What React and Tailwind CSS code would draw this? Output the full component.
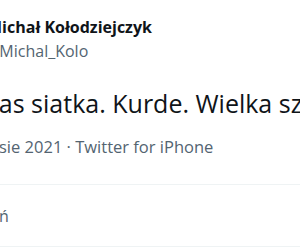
import React from 'react'

export default function App() {
    return (
        <div className="w-[300px] h-[250px] overflow-hidden bg-white" style={{ fontFamily: '"Open Sans", "Noto Sans", sans-serif' }}>
            {/* Author */}
            <div className="pt-[17px] whitespace-nowrap">
                <div className="ml-[-13px] text-[16px] leading-[20px] font-bold text-[#0f1419]">Michał Kołodziejczyk</div>
                <div className="ml-[-15px] text-[16px] leading-[20px] mt-[4px] text-[#536471]">@Michal_Kolo</div>
            </div>

            {/* Tweet text */}
            <div className="mt-[27px] ml-[-20px] whitespace-nowrap text-[25px] leading-[30px] text-[#0f1419]">
                Nas siatka. Kurde. Wielka szkoda
            </div>

            {/* Meta */}
            <div className="mt-[19px] ml-[-1px] whitespace-nowrap text-[16.5px] leading-[20px] text-[#536471]">
                sie 2021 · Twitter for iPhone
            </div>

            {/* Stats */}
            <div className="mt-[27px] border-t border-b border-[#eff3f4] h-[63px] flex items-center">
                <span className="ml-[-1px] text-[16px] leading-[20px] text-[#536471]">ń</span>
            </div>
        </div>
    )
}
